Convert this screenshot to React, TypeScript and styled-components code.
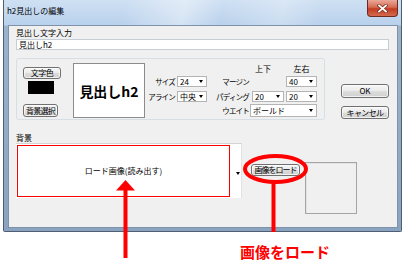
import React from "react";
import styled, { createGlobalStyle } from "styled-components";

const GlobalStyle = createGlobalStyle`
  html, body { margin: 0; padding: 0; background: #ffffff; }
  #root { width: 407px; height: 267px; overflow: hidden; }
`;

const Page = styled.div`
  position: relative;
  width: 407px;
  height: 267px;
  overflow: hidden;
  background: #ffffff;
  font-family: "Noto Sans CJK JP", "Noto Sans", sans-serif;
  font-size: 8px;
  color: #000;
`;

const Window = styled.div`
  margin-left: 3px;
  width: 399px;
  height: 232px;
  box-sizing: border-box;
  display: flex;
  flex-direction: column;
  padding: 0 3px 3px 4px;
  border: 1px solid #4f5e72;
  border-top: none;
  border-radius: 0 0 2px 2px;
  background:
    linear-gradient(100deg, rgba(255,255,255,0) 30%, rgba(255,255,255,0.4) 45%, rgba(255,255,255,0) 55%, rgba(255,255,255,0.25) 70%, rgba(255,255,255,0) 80%) top / 100% 25px no-repeat,
    linear-gradient(to bottom, #cfe0f3 0px, #b9d1ec 25px, #9cb3cd 26px, #8aa3c0 100%);
`;

const TitleBar = styled.div`
  height: 25px;
  flex: none;
  display: flex;
  align-items: flex-start;
  justify-content: space-between;
`;

const TitleText = styled.span`
  margin: 6px 0 0 -1px;
  font-size: 8px;
  line-height: 10px;
  color: #000;
`;

const CloseButton = styled.div`
  width: 31px;
  height: 17px;
  box-sizing: border-box;
  display: flex;
  align-items: center;
  justify-content: center;
  border: 1px solid #6e2a1f;
  border-top: none;
  border-radius: 0 0 4px 4px;
  background: linear-gradient(to bottom, #eaa999 0%, #d66b52 45%, #c23c22 55%, #d46a50 100%);
`;

const Client = styled.div`
  flex: 1;
  display: flex;
  flex-direction: column;
  padding: 2px 0 0 7px;
  background: #f0f0f0;
  border: 1px solid #7e92aa;
`;

const FieldLabel = styled.div<{ $gap?: number }>`
  height: 10px;
  line-height: 10px;
  margin-top: ${(p) => p.$gap ?? 0}px;
`;

const TextInput = styled.div`
  margin-top: 1px;
  width: 373px;
  height: 11px;
  box-sizing: border-box;
  background: #fff;
  border: 1px solid #c5cdd6;
  padding-left: 2px;
  line-height: 9px;
`;

const MiddleRow = styled.div`
  margin-top: 8px;
  display: flex;
  align-items: flex-start;
`;

const GroupBox = styled.div`
  width: 309px;
  height: 62px;
  box-sizing: border-box;
  border: 1px solid #d5dfe5;
  border-radius: 3px;
  display: flex;
  align-items: flex-start;
`;

const LeftColumn = styled.div`
  margin: 8px 0 0 6px;
  width: 38px;
  display: flex;
  flex-direction: column;
  align-items: flex-start;
`;

const Button = styled.div<{ $w: number; $h: number; $mt?: number; $ml?: number; $ls?: number }>`
  width: ${(p) => p.$w}px;
  height: ${(p) => p.$h}px;
  margin-top: ${(p) => p.$mt ?? 0}px;
  margin-left: ${(p) => p.$ml ?? 0}px;
  box-sizing: border-box;
  flex: none;
  display: flex;
  align-items: center;
  justify-content: center;
  border: 1px solid #707070;
  border-radius: 3px;
  background: linear-gradient(to bottom, #f6f6f6 0%, #ebebeb 48%, #dddddd 52%, #cfcfcf 100%);
  box-shadow: inset 0 0 0 1px rgba(255, 255, 255, 0.7);
  font-size: 8px;
  line-height: 8px;
  white-space: nowrap;
  letter-spacing: ${(p) => p.$ls ?? 0}px;
`;

const Swatch = styled.div`
  margin: 2px 0 0 5px;
  width: 26px;
  height: 13px;
  background: #000;
`;

const Preview = styled.div`
  margin: 4px 0 0 12px;
  width: 72px;
  height: 55px;
  box-sizing: border-box;
  background: #fff;
  border: 1px solid #8c8c8c;
  display: flex;
  align-items: center;
  justify-content: center;
  font-size: 14px;
  font-weight: 700;
  line-height: 16px;
`;

const SettingsGrid = styled.div`
  margin: 4px 0 0 10px;
  display: grid;
  grid-template-columns: 22px 30px 45px 32px 2px 31px;
  grid-template-rows: 12px 15px 14px 13px;
`;

const Header = styled.div<{ $col: number; $center?: boolean }>`
  grid-column: ${(p) => p.$col};
  grid-row: 1;
  align-self: center;
  line-height: 10px;
  padding-left: ${(p) => (p.$center ? 0 : 3)}px;
  text-align: ${(p) => (p.$center ? "center" : "left")};
`;

const RowLabel = styled.div<{ $col: number; $row: number; $pr: number }>`
  grid-column: ${(p) => p.$col};
  grid-row: ${(p) => p.$row};
  justify-self: end;
  padding-right: ${(p) => p.$pr}px;
  margin-top: 1px;
  height: 11px;
  line-height: 11px;
  font-size: 7.5px;
  letter-spacing: -0.8px;
  white-space: nowrap;
`;

const SelectBox = styled.div<{ $col: string; $row: number; $h?: number; $ml?: number }>`
  grid-column: ${(p) => p.$col};
  grid-row: ${(p) => p.$row};
  margin-top: ${(p) => (p.$h ? 0 : 1)}px;
  margin-left: ${(p) => p.$ml ?? 0}px;
  height: ${(p) => p.$h ?? 11}px;
  box-sizing: border-box;
  background: #fff;
  border: 1px solid #b4b4b4;
  display: flex;
  align-items: center;
  justify-content: space-between;
  padding: 0 3px 0 2px;
  font-size: 8px;
  line-height: 8px;
  white-space: nowrap;
`;

const Caret = styled.span`
  width: 0;
  height: 0;
  border-left: 2.5px solid transparent;
  border-right: 2.5px solid transparent;
  border-top: 3px solid #000;
`;

const ButtonColumn = styled.div`
  margin-left: 16px;
  padding-top: 26px;
  display: flex;
  flex-direction: column;
  gap: 8px;
`;

const BottomRow = styled.div`
  display: flex;
  align-items: flex-start;
`;

const Combo = styled.div`
  width: 226px;
  height: 55px;
  box-sizing: border-box;
  background: #fff;
  border-top: 1px solid #d4d4d4;
  border-right: 1px solid #e2e2e2;
  display: flex;
  align-items: flex-start;
  padding: 1px 0 0 1px;
`;

const ImageSlot = styled.div`
  width: 213px;
  height: 52px;
  box-sizing: border-box;
  border: 1px solid #ff0000;
  display: flex;
  align-items: center;
  justify-content: center;
  line-height: 10px;
`;

const ComboCaret = styled(Caret)`
  margin: 27px 0 0 6px;
`;

const Thumb = styled.div`
  margin: 19px 0 0 5px;
  width: 52px;
  height: 52px;
  box-sizing: border-box;
  border: 1px solid #a5a5a5;
  box-shadow: inset 1px 1px 0 #e3e3e3;
  background: #f0f0f0;
`;

const Overlay = styled.svg`
  position: absolute;
  left: 0;
  top: 0;
  pointer-events: none;
`;

const Callout = styled.div`
  position: absolute;
  left: 240px;
  top: 243px;
  font-size: 15px;
  line-height: 17px;
  font-weight: 700;
  color: #ff0000;
  white-space: nowrap;
`;

export default function App() {
  return (
    <Page>
      <GlobalStyle />
      <Window>
        <TitleBar>
          <TitleText>h2見出しの編集</TitleText>
          <CloseButton>
            <svg width="11" height="9" viewBox="0 0 11 9">
              <path d="M2 1.5 L9 7.5 M9 1.5 L2 7.5" stroke="#7a2a1c" strokeWidth="3.2" strokeLinecap="square" />
              <path d="M2 1.5 L9 7.5 M9 1.5 L2 7.5" stroke="#ffffff" strokeWidth="1.8" strokeLinecap="square" />
            </svg>
          </CloseButton>
        </TitleBar>
        <Client>
          <FieldLabel>見出し文字入力</FieldLabel>
          <TextInput>見出しh2</TextInput>
          <MiddleRow>
            <GroupBox>
              <LeftColumn>
                <Button $w={38} $h={12} $ls={-0.5}>文字色</Button>
                <Swatch />
                <Button $w={35} $h={13} $mt={10} $ls={-0.7}>背景選択</Button>
              </LeftColumn>
              <Preview>見出しh2</Preview>
              <SettingsGrid>
                <Header $col={4}>上下</Header>
                <Header $col={6} $center>左右</Header>
                <RowLabel $col={1} $row={2} $pr={2}>サイズ</RowLabel>
                <SelectBox $col="2" $row={2}>24<Caret /></SelectBox>
                <RowLabel $col={3} $row={2} $pr={3}>マージン</RowLabel>
                <SelectBox $col="6" $row={2}>40<Caret /></SelectBox>
                <RowLabel $col={1} $row={3} $pr={2}>アライン</RowLabel>
                <SelectBox $col="2" $row={3}>中央<Caret /></SelectBox>
                <RowLabel $col={3} $row={3} $pr={3}>パディング</RowLabel>
                <SelectBox $col="4" $row={3}>20<Caret /></SelectBox>
                <SelectBox $col="6" $row={3}>20<Caret /></SelectBox>
                <RowLabel $col={3} $row={4} $pr={3}>ウエイト</RowLabel>
                <SelectBox $col="4 / 7" $row={4} $h={13} $ml={-2}>ボールド<Caret /></SelectBox>
              </SettingsGrid>
            </GroupBox>
            <ButtonColumn>
              <Button $w={48} $h={14}>OK</Button>
              <Button $w={48} $h={13} $ls={-0.6}>キャンセル</Button>
            </ButtonColumn>
          </MiddleRow>
          <FieldLabel $gap={13}>背景</FieldLabel>
          <BottomRow>
            <Combo>
              <ImageSlot>ロード画像(読み出す)</ImageSlot>
              <ComboCaret />
            </Combo>
            <Button $w={49} $h={12} $mt={21} $ml={9} $ls={-1}>画像をロード</Button>
            <Thumb />
          </BottomRow>
        </Client>
      </Window>
      <Overlay width="407" height="267" viewBox="0 0 407 267">
        <ellipse cx="275.5" cy="169" rx="30.5" ry="13" fill="none" stroke="#ff0000" strokeWidth="4" />
        <rect x="271.5" y="181" width="4" height="51" fill="#ff0000" />
        <rect x="123.5" y="188" width="4" height="70" fill="#ff0000" />
        <polygon points="125.5,180 116,190.5 135,190.5" fill="#ff0000" />
      </Overlay>
      <Callout>画像をロード</Callout>
    </Page>
  );
}
